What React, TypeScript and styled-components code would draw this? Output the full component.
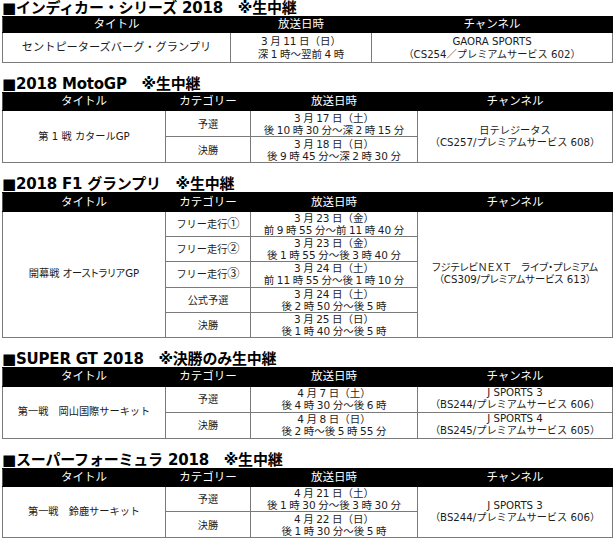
import React from 'react';
import styled, { createGlobalStyle } from 'styled-components';

const Global = createGlobalStyle`
  html, body { margin: 0; padding: 0; background: #fff; }
  body {
    font-family: "DejaVu Sans", "Noto Sans CJK JP", sans-serif;
    color: #1c1c1c;
  }
`;

const Page = styled.div`
  width: 615px;
  padding: 0 3px 0 2px;
  box-sizing: border-box;
`;

const Section = styled.section`
  & + & { margin-top: 13px; }
`;

const Heading = styled.h2`
  margin: 0;
  height: 16px;
  font-size: 15px;
  line-height: 16px;
  font-weight: 700;
  color: #000;
  white-space: nowrap;
  letter-spacing: -0.2px;
`;

const Table = styled.table`
  width: 610px;
  border-collapse: collapse;
  table-layout: fixed;
  border: 1px solid #6f6f6f;
`;

const HeadRow = styled.tr<{ $h: number }>`
  height: ${p => p.$h}px;
`;

const Th = styled.th`
  background: #000;
  color: #fff;
  font-weight: 400;
  font-size: 11.5px;
  line-height: 13px;
  padding: 0;
  border: 1px solid #000;
  border-left-color: #555;
  white-space: nowrap;
`;

const BodyRow = styled.tr<{ $h: number }>`
  height: ${p => p.$h}px;
`;

const Td = styled.td<{ $size?: number; $lh?: number; $palt?: boolean; $ws?: number; $cjk?: boolean }>`
  padding: 0;
  border: 1px solid #7a7a7a;
  text-align: center;
  vertical-align: middle;
  font-family: ${p => (p.$cjk ? '"Noto Sans CJK JP", sans-serif' : 'inherit')};
  font-size: ${p => p.$size ?? 10.5}px;
  line-height: ${p => p.$lh ?? 12}px;
  word-spacing: ${p => p.$ws ?? 0}px;
  font-feature-settings: ${p => (p.$palt ? '"palt"' : 'normal')};
  white-space: nowrap;
  overflow: hidden;
`;

const Circled = styled.span`
  font-size: 1.2em;
  line-height: 0;
`;

type Slot = { cat?: string; mark?: string; date: [string, string]; channel?: [string, string] };
type Race = { title: string; slots: Slot[]; channel?: [string, string]; paltTitle?: boolean; paltChannel?: boolean };
type Sec = {
  heading: string;
  cols: number[];
  headers: string[];
  headH: number;
  rowH: number;
  titleSize: number;
  lh: number;
  race: Race;
};

const cols4 = [163, 85, 167, 195];
const heads4 = ['タイトル', 'カテゴリー', '放送日時', 'チャンネル'];

const sections: Sec[] = [
  {
    heading: '■インディカー・シリーズ 2018　※生中継',
    cols: [228, 141, 241],
    headers: ['タイトル', '放送日時', 'チャンネル'],
    headH: 16,
    rowH: 30,
    titleSize: 11.2,
    lh: 13,
    race: {
      title: 'セントピーターズバーグ・グランプリ',
      slots: [{ date: ['3 月 11 日（日）', '深 1 時～翌前 4 時'] }],
      channel: ['GAORA SPORTS', '（CS254／プレミアムサービス 602）'],
    },
  },
  {
    heading: '■2018 MotoGP　※生中継',
    cols: cols4,
    headers: heads4,
    headH: 18,
    rowH: 26,
    titleSize: 10.2,
    lh: 12,
    race: {
      title: '第 1 戦 カタールGP',
      slots: [
        { cat: '予選', date: ['3 月 17 日（土）', '後 10 時 30 分～深 2 時 15 分'] },
        { cat: '決勝', date: ['3 月 18 日（日）', '後 9 時 45 分～深 2 時 30 分'] },
      ],
      channel: ['日テレジータス', '（CS257/プレミアムサービス 608）'],
    },
  },
  {
    heading: '■2018 F1 グランプリ　※生中継',
    cols: cols4,
    headers: heads4,
    headH: 19,
    rowH: 25.2,
    titleSize: 10.2,
    lh: 12,
    race: {
      title: '開幕戦 オーストラリアGP',
      paltTitle: true,
      paltChannel: true,
      slots: [
        { cat: 'フリー走行', mark: '①', date: ['3 月 23 日（金）', '前 9 時 55 分～前 11 時 40 分'] },
        { cat: 'フリー走行', mark: '②', date: ['3 月 23 日（金）', '後 1 時 55 分～後 3 時 40 分'] },
        { cat: 'フリー走行', mark: '③', date: ['3 月 24 日（土）', '前 11 時 55 分～後 1 時 10 分'] },
        { cat: '公式予選', date: ['3 月 24 日（土）', '後 2 時 50 分～後 5 時'] },
        { cat: '決勝', date: ['3 月 25 日（日）', '後 1 時 40 分～後 5 時'] },
      ],
      channel: ['フジテレビＮＥＸＴ　ライブ・プレミアム', '（CS309/プレミアムサービス 613）'],
    },
  },
  {
    heading: '■SUPER GT 2018　※決勝のみ生中継',
    cols: cols4,
    headers: heads4,
    headH: 19,
    rowH: 26,
    titleSize: 10.2,
    lh: 12,
    race: {
      title: '第一戦　岡山国際サーキット',
      slots: [
        {
          cat: '予選',
          date: ['4 月 7 日（土）', '後 4 時 30 分～後 6 時'],
          channel: ['J SPORTS 3', '（BS244/プレミアムサービス 606）'],
        },
        {
          cat: '決勝',
          date: ['4 月 8 日（日）', '後 2 時～後 5 時 55 分'],
          channel: ['J SPORTS 4', '（BS245/プレミアムサービス 605）'],
        },
      ],
    },
  },
  {
    heading: '■スーパーフォーミュラ 2018　※生中継',
    cols: cols4,
    headers: heads4,
    headH: 18,
    rowH: 25.5,
    titleSize: 10.2,
    lh: 12,
    race: {
      title: '第一戦　鈴鹿サーキット',
      slots: [
        { cat: '予選', date: ['4 月 21 日（土）', '後 1 時 30 分～後 3 時 30 分'] },
        { cat: '決勝', date: ['4 月 22 日（日）', '後 1 時 30 分～後 5 時'] },
      ],
      channel: ['J SPORTS 3', '（BS244/プレミアムサービス 606）'],
    },
  },
];

const TwoLines: React.FC<{ lines: [string, string] }> = ({ lines }) => (
  <>
    {lines[0]}
    <br />
    {lines[1]}
  </>
);

const ScheduleTable: React.FC<{ sec: Sec }> = ({ sec }) => {
  const { race } = sec;
  const n = race.slots.length;
  return (
    <Table>
      <colgroup>
        {sec.cols.map((w, i) => (
          <col key={i} style={{ width: w }} />
        ))}
      </colgroup>
      <thead>
        <HeadRow $h={sec.headH}>
          {sec.headers.map(h => (
            <Th key={h}>{h}</Th>
          ))}
        </HeadRow>
      </thead>
      <tbody>
        {race.slots.map((s, i) => (
          <BodyRow key={i} $h={sec.rowH}>
            {i === 0 && (
              <Td rowSpan={n} $size={sec.titleSize} $palt={race.paltTitle}>
                {race.title}
              </Td>
            )}
            {s.cat !== undefined && (
              <Td $size={10.2} $cjk>
                {s.cat}
                {s.mark && <Circled>{s.mark}</Circled>}
              </Td>
            )}
            <Td $lh={sec.lh} $ws={-0.8}>
              <TwoLines lines={s.date} />
            </Td>
            {race.channel && i === 0 && (
              <Td rowSpan={n} $lh={sec.lh} $size={10.2} $palt={race.paltChannel}>
                <TwoLines lines={race.channel} />
              </Td>
            )}
            {!race.channel && s.channel && (
              <Td $lh={sec.lh} $size={10.2}>
                <TwoLines lines={s.channel} />
              </Td>
            )}
          </BodyRow>
        ))}
      </tbody>
    </Table>
  );
};

export default function App() {
  return (
    <>
      <Global />
      <Page>
        {sections.map(sec => (
          <Section key={sec.heading}>
            <Heading>{sec.heading}</Heading>
            <ScheduleTable sec={sec} />
          </Section>
        ))}
      </Page>
    </>
  );
}
